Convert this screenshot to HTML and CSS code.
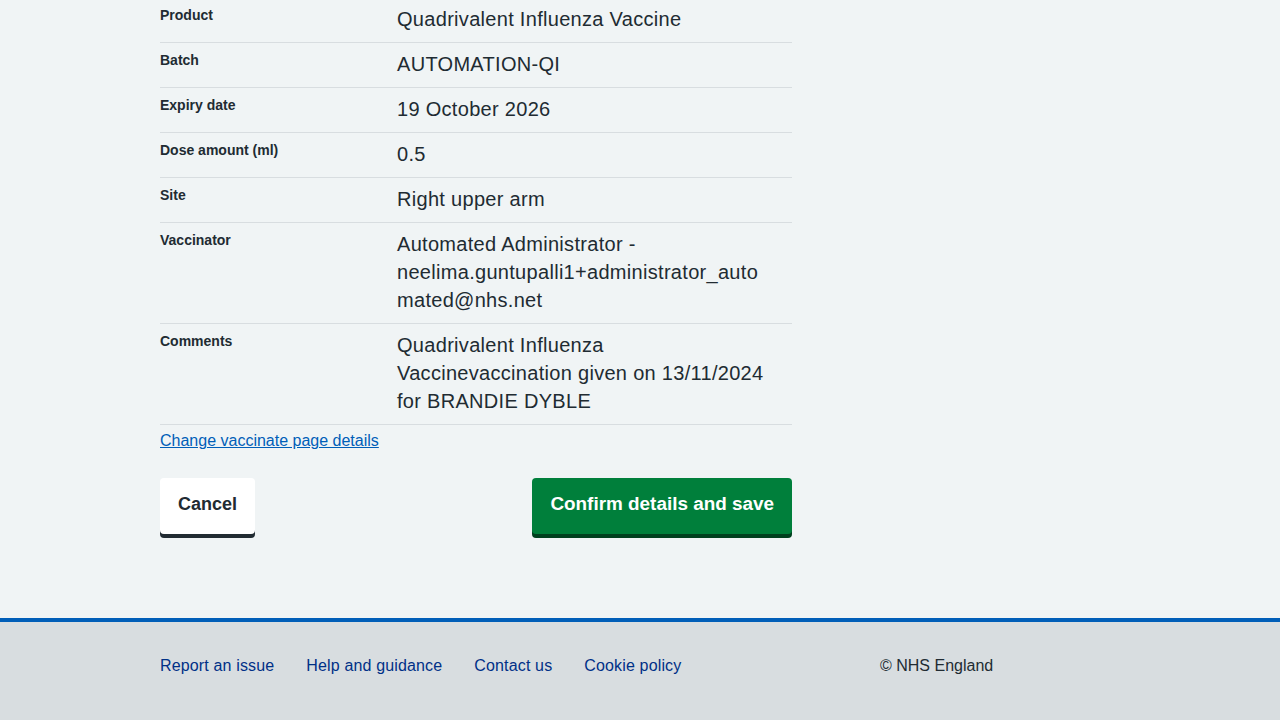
FILE: index.html
```html
<!DOCTYPE html>
<html lang="en">
<head>
<meta charset="utf-8">
<title>Check and confirm</title>
<link rel="stylesheet" href="styles.css">
</head>
<body>
<div class="page">
  <main class="main">
    <div class="container">
      <div class="content">
        <dl class="summary">
          <div class="row"><dt class="key">Product</dt><dd class="value">Quadrivalent Influenza Vaccine</dd></div>
          <div class="row"><dt class="key">Batch</dt><dd class="value">AUTOMATION-QI</dd></div>
          <div class="row"><dt class="key">Expiry date</dt><dd class="value">19 October 2026</dd></div>
          <div class="row"><dt class="key">Dose amount (ml)</dt><dd class="value">0.5</dd></div>
          <div class="row"><dt class="key">Site</dt><dd class="value">Right upper arm</dd></div>
          <div class="row"><dt class="key">Vaccinator</dt><dd class="value">Automated Administrator -<br>neelima.guntupalli1+administrator_auto<br>mated@nhs.net</dd></div>
          <div class="row"><dt class="key">Comments</dt><dd class="value">Quadrivalent Influenza<br>Vaccinevaccination given on 13/11/2024<br>for BRANDIE DYBLE</dd></div>
        </dl>
        <p class="change"><a href="#" class="change-link">Change vaccinate page details</a></p>
        <div class="actions">
          <button class="btn btn-secondary" type="button">Cancel</button>
          <button class="btn btn-primary" type="button">Confirm details and save</button>
        </div>
      </div>
    </div>
  </main>
  <footer class="footer">
    <div class="container footer-inner">
      <ul class="footer-links">
        <li><a href="#">Report an issue</a></li>
        <li><a href="#">Help and guidance</a></li>
        <li><a href="#">Contact us</a></li>
        <li><a href="#">Cookie policy</a></li>
      </ul>
      <p class="copyright">© NHS England</p>
    </div>
  </footer>
</div>
</body>
</html>
```

FILE: styles.css
```css
* { box-sizing: border-box; }

html, body {
  margin: 0;
  padding: 0;
}

body {
  background: #f0f4f5;
  color: #212b32;
  font-family: "Liberation Sans", Arial, sans-serif;
}

.page {
  height: 720px;
  display: flex;
  flex-direction: column;
  overflow: hidden;
}

.main {
  flex: 1;
}

.container {
  width: 960px;
  margin: 0 auto;
}

.content {
  width: 632px;
  margin-top: -2px;
}

.summary {
  margin: 0;
}

.row {
  display: grid;
  grid-template-columns: 237px 1fr;
  border-bottom: 1px solid #d8dde0;
}

.key {
  margin: 0;
  padding: 7px 24px 9px 0;
  font-size: 14px;
  font-weight: 700;
  line-height: 20px;
}

.value {
  margin: 0;
  padding: 7px 24px 9px 0;
  font-size: 20px;
  letter-spacing: 0.3px;
  line-height: 28px;
  white-space: nowrap;
}

.change {
  margin: 4px 0 0;
  font-size: 16px;
  line-height: 24px;
}

.change-link {
  color: #005eb8;
  text-decoration: underline;
}

.actions {
  display: flex;
  justify-content: space-between;
  align-items: flex-start;
  margin-top: 25px;
}

.btn {
  font-family: "Liberation Sans", Arial, sans-serif;
  font-weight: 700;
  line-height: 28px;
  padding: 10px 16px 14px;
  border: 2px solid transparent;
  border-radius: 4px;
  cursor: pointer;
  height: 56px;
}

.btn-secondary {
  background: #ffffff;
  color: #212b32;
  box-shadow: 0 4px 0 #212b32;
  font-size: 18px;
}

.btn-primary {
  background: #007f3b;
  color: #ffffff;
  box-shadow: 0 4px 0 #00401e;
  font-size: 18.9px;
}

.footer {
  height: 102px;
  background: #d8dde0;
  border-top: 4px solid #005eb8;
}

.footer-inner {
  display: flex;
  padding-top: 32px;
}

.footer-links {
  list-style: none;
  margin: 0;
  padding: 0;
  width: 720px;
  display: flex;
  gap: 32px;
}

.footer-links a {
  color: #003087;
  text-decoration: none;
  font-size: 16px;
  letter-spacing: 0.15px;
  line-height: 24px;
}

.copyright {
  margin: 0;
  font-size: 16px;
  line-height: 24px;
  color: #212b32;
}
```
